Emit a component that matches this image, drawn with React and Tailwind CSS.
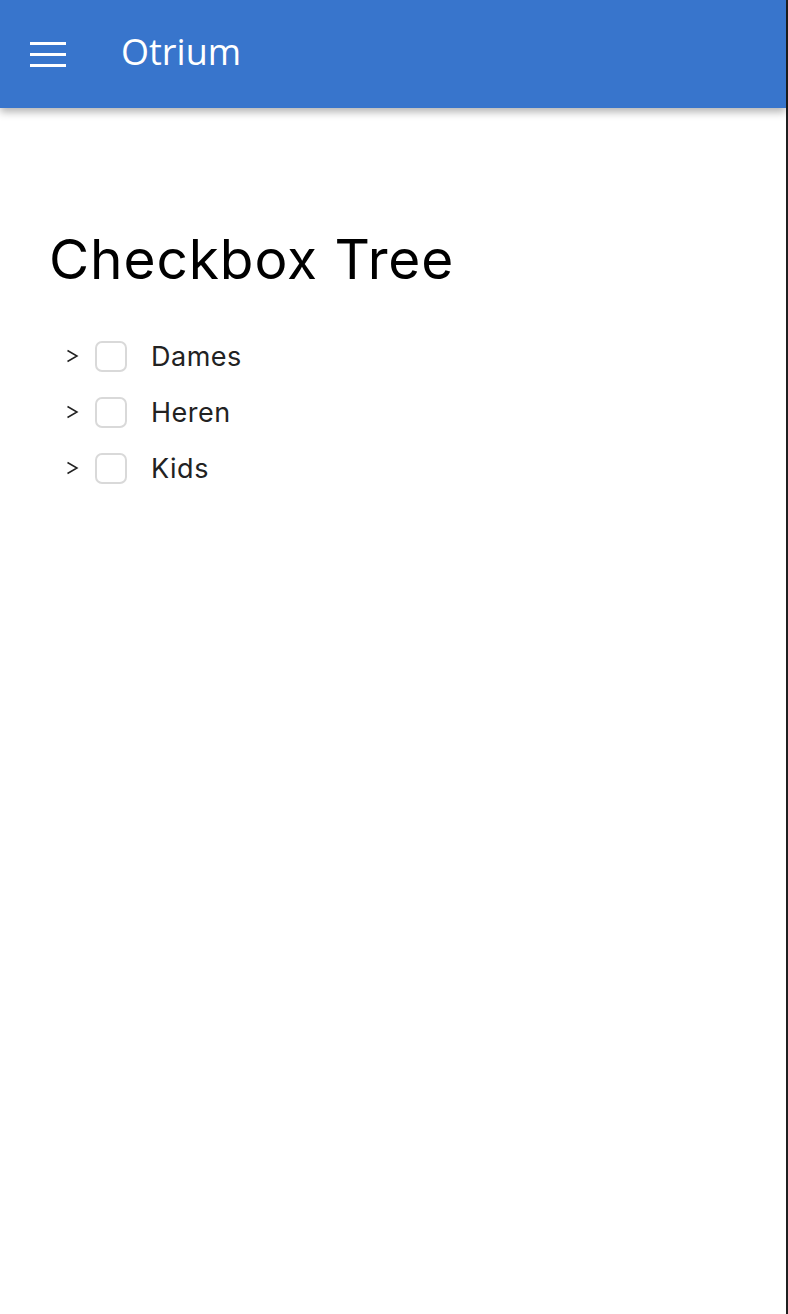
import React from 'react';

const NODES = ['Dames', 'Heren', 'Kids'];

const App = () => {
  return (
    <div className="min-h-[1314px] w-[788px] bg-white border-r-2 border-[#1f1f1f]">
      <header className="h-[108px] bg-[#3875cc] flex items-center shadow-[0_4px_8px_rgba(0,0,0,0.3)] relative z-10">
        <div className="ml-[30px] w-[36px] flex flex-col gap-[8px]">
          <span className="block h-[3px] bg-white" />
          <span className="block h-[3px] bg-white" />
          <span className="block h-[3px] bg-white" />
        </div>
        <h1 className="ml-[55px] text-white text-[36px] font-['Open_Sans',sans-serif] leading-none pb-[4px]">Otrium</h1>
      </header>

      <main className="px-[49px] pt-[124px] font-['Inter',sans-serif]">
        <h2 className="text-[55px] leading-none tracking-[0.9px] text-black">Checkbox Tree</h2>
        <ul className="mt-[53px] ml-[16px] flex flex-col gap-[24px]">
          {NODES.map((n) => (
            <li key={n} className="flex items-center h-[32px]">
              <svg width="14" height="14" viewBox="0 0 14 14" className="text-[#222]">
                <path d="M2.5 1.5 L12 7 L2.5 12.5" fill="none" stroke="currentColor" strokeWidth="1.5" />
              </svg>
              <span className="ml-[16px] w-[32px] h-[31px] rounded-[7px] border-2 border-[#d9d9d9] bg-white" />
              <span className="ml-[24px] text-[27px] tracking-[0.5px] text-[#222] leading-none">{n}</span>
            </li>
          ))}
        </ul>
      </main>
    </div>
  );
};

export default App;
